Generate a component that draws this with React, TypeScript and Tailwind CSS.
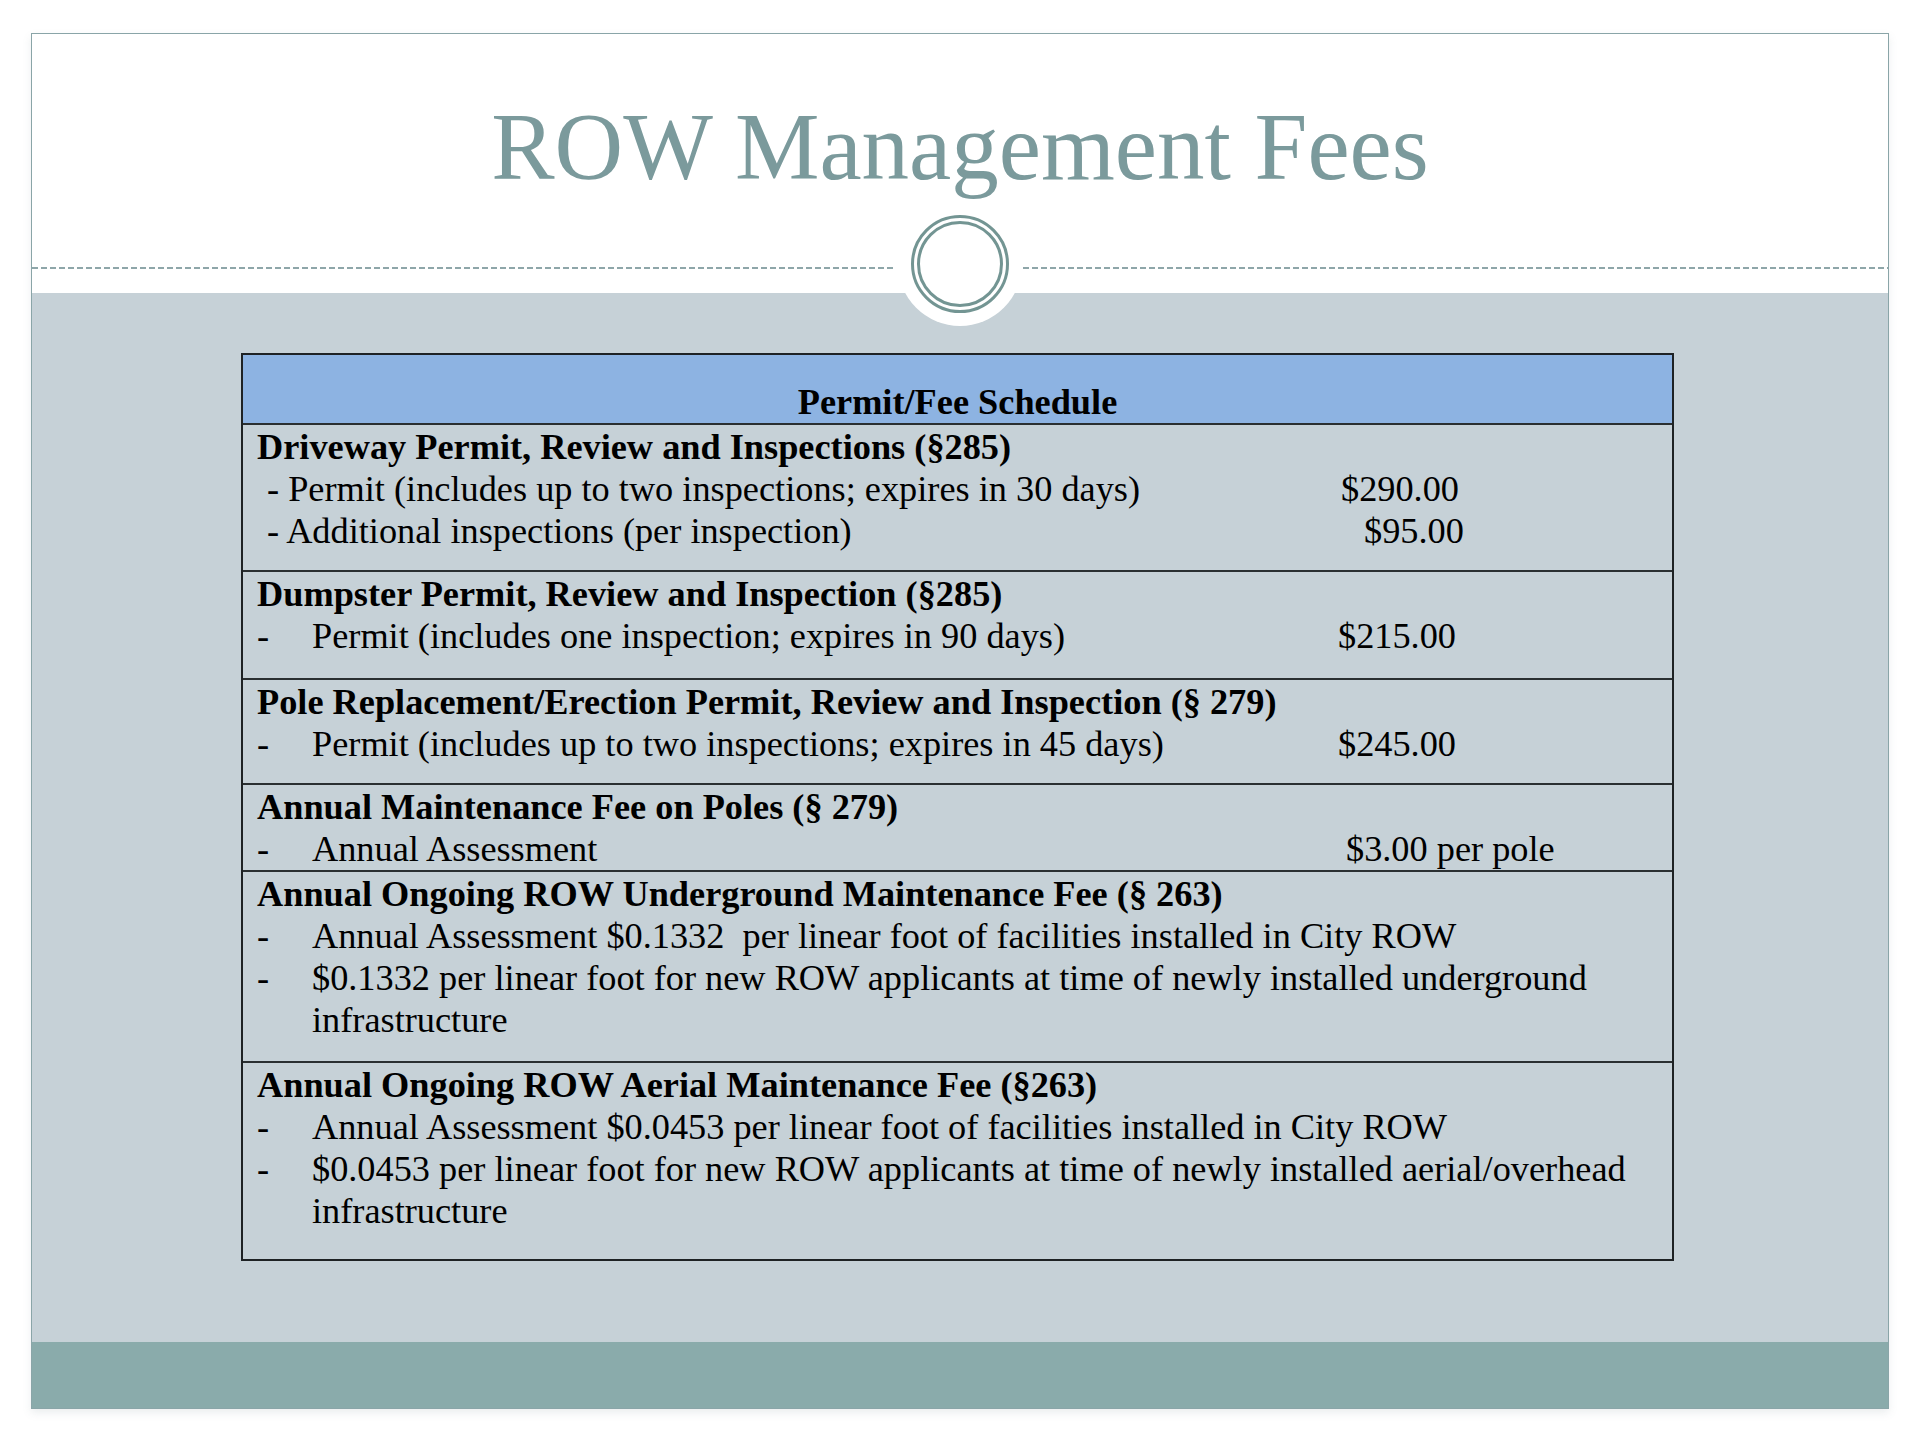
import React from 'react'

type Line = { text: string; dash?: 'lead' | 'hang' | 'cont'; price?: string; priceAt?: number }
type Row = { title: string; height: number; lines: Line[] }

const rows: Row[] = [
  {
    title: 'Driveway Permit, Review and Inspections (§285)',
    height: 147,
    lines: [
      { text: '- Permit (includes up to two inspections; expires in 30 days)', dash: 'lead', price: '$290.00', priceAt: 1084 },
      { text: '- Additional inspections (per inspection)', dash: 'lead', price: '$95.00', priceAt: 1107 },
    ],
  },
  {
    title: 'Dumpster Permit, Review and Inspection (§285)',
    height: 108,
    lines: [{ text: 'Permit (includes one inspection; expires in 90 days)', dash: 'hang', price: '$215.00', priceAt: 1081 }],
  },
  {
    title: 'Pole Replacement/Erection Permit, Review and Inspection (§ 279)',
    height: 105,
    lines: [{ text: 'Permit (includes up to two inspections; expires in 45 days)', dash: 'hang', price: '$245.00', priceAt: 1081 }],
  },
  {
    title: 'Annual Maintenance Fee on Poles (§ 279)',
    height: 87,
    lines: [{ text: 'Annual Assessment', dash: 'hang', price: '$3.00 per pole', priceAt: 1089 }],
  },
  {
    title: 'Annual Ongoing ROW Underground Maintenance Fee (§ 263)',
    height: 191,
    lines: [
      { text: 'Annual Assessment $0.1332  per linear foot of facilities installed in City ROW', dash: 'hang' },
      { text: '$0.1332 per linear foot for new ROW applicants at time of newly installed underground', dash: 'hang' },
      { text: 'infrastructure', dash: 'cont' },
    ],
  },
  {
    title: 'Annual Ongoing ROW Aerial Maintenance Fee (§263)',
    height: 196,
    lines: [
      { text: 'Annual Assessment $0.0453 per linear foot of facilities installed in City ROW', dash: 'hang' },
      { text: '$0.0453 per linear foot for new ROW applicants at time of newly installed aerial/overhead', dash: 'hang' },
      { text: 'infrastructure', dash: 'cont' },
    ],
  },
]

const FeeLine = ({ line }: { line: Line }) => {
  if (line.dash === 'lead') {
    return (
      <div className="flex h-[42px] items-center">
        <span className="shrink-0 whitespace-pre pl-[10px]" style={{ width: line.priceAt }}>
          {line.text}
        </span>
        {line.price && <span className="whitespace-pre">{line.price}</span>}
      </div>
    )
  }
  return (
    <div className="flex h-[42px] items-center">
      <div className="flex shrink-0" style={{ width: line.priceAt }}>
        <span className="w-[55px] shrink-0">{line.dash === 'hang' ? '-' : ''}</span>
        <span className="whitespace-pre">{line.text}</span>
      </div>
      {line.price && <span className="whitespace-pre">{line.price}</span>}
    </div>
  )
}

const App = () => {
  return (
    <div className="h-[1440px] w-[1920px] bg-white pl-[31px] pt-[33px] font-['Liberation_Serif',serif]">
      <div className="flex h-[1376px] w-[1858px] flex-col border border-[#8aa5a8] shadow-[0_4px_8px_rgba(120,140,145,0.15)]">
        {/* title area */}
        <div className="relative flex h-[259px] flex-col bg-white">
          <h1 className="pt-[66px] text-center text-[95px] leading-none font-normal text-[#7b9a9c]">
            ROW Management Fees
          </h1>
          <div className="mt-[72px] flex items-center">
            <div className="h-[2px] w-[864px] bg-[repeating-linear-gradient(to_right,#8ea6a9_0_6px,transparent_6px_9px)]" />
            <div className="w-[127px]" />
            <div className="h-[2px] flex-1 bg-[repeating-linear-gradient(to_right,#8ea6a9_0_6px,transparent_6px_9px)]" />
          </div>
          <div className="absolute top-[168px] left-[866px] z-10 flex h-[124px] w-[124px] items-center justify-center rounded-full bg-white">
            <div className="flex h-[98px] w-[98px] items-center justify-center rounded-full border-[3px] border-[#739593]">
              <div className="h-[86px] w-[86px] rounded-full border-[3px] border-[#739593]" />
            </div>
          </div>
        </div>

        {/* content band */}
        <div className="flex-1 bg-[#c6d1d7] pt-[60px] pl-[209px]">
          <div className="w-[1433px] border-2 border-[#1e2224] text-[36.3px] leading-[42px] text-black">
            <div className="flex h-[70px] items-end justify-center border-b-2 border-[#2a2f31] bg-[#8db3e2] font-bold">
              Permit/Fee Schedule
            </div>
            {rows.map((row, i) => (
              <div
                key={row.title}
                className={`pl-[14px] pt-[1px] ${i < rows.length - 1 ? 'border-b-2 border-[#2a2f31]' : ''}`}
                style={{ height: row.height }}
              >
                <div className="h-[42px] font-bold whitespace-pre">{row.title}</div>
                {row.lines.map((l) => (
                  <FeeLine key={l.text} line={l} />
                ))}
              </div>
            ))}
          </div>
        </div>

        {/* footer band */}
        <div className="h-[66px] bg-[#8aabab]" />
      </div>
    </div>
  )
}

export default App
